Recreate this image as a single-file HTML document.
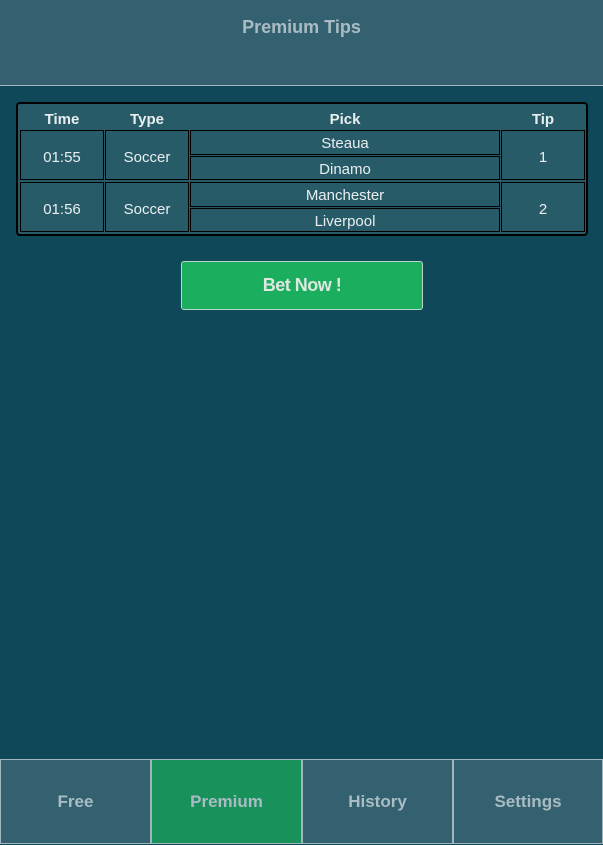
<!DOCTYPE html>
<html><head><style>
body{margin:0;width:603px;height:845px;background:#0f4858;font-family:"Liberation Sans","DejaVu Sans",sans-serif;position:relative;overflow:hidden}
.a{position:absolute;box-sizing:border-box;display:flex;align-items:center;justify-content:center}
.hdr{left:0;top:0;width:603px;height:86px;background:#33616f;border-bottom:1px solid #9fb6bd;color:#a9bcc3;font-weight:bold;font-size:18px;align-items:flex-start;padding-top:17px}
.tbl{left:16px;top:102px;width:572px;height:134px;background:#285b68;border:2px solid #000;border-radius:4px}
.th{color:#e8eef0;font-weight:bold;font-size:15px;top:109px;height:20px}
.c{border:1.5px solid #000;background:#285b68;color:#e8eef0;font-size:15px;padding-top:2px}
.big{padding-top:4px}
.btn{left:181px;top:261px;width:242px;height:49px;background:#1bae5e;border:1px solid #b9d9c6;border-radius:3px;color:#dde8e2;font-weight:bold;font-size:18px;letter-spacing:-0.5px}
.tab{top:759px;height:85px;width:151px;background:#33616f;border:1px solid #9fb6bd;color:#a9bcc3;font-weight:bold;font-size:17px}
</style></head><body>
<div class="a hdr">Premium Tips</div>
<div class="a tbl"></div>
<div class="a th" style="left:20px;width:84px">Time</div>
<div class="a th" style="left:105px;width:84px">Type</div>
<div class="a th" style="left:190px;width:310px">Pick</div>
<div class="a th" style="left:501px;width:84px">Tip</div>
<div class="a c big" style="left:20px;top:130px;width:84px;height:50px">01:55</div>
<div class="a c big" style="left:105px;top:130px;width:84px;height:50px">Soccer</div>
<div class="a c" style="left:190px;top:130px;width:310px;height:25px">Steaua</div>
<div class="a c" style="left:190px;top:156px;width:310px;height:24px">Dinamo</div>
<div class="a c big" style="left:501px;top:130px;width:84px;height:50px">1</div>
<div class="a c big" style="left:20px;top:182px;width:84px;height:50px">01:56</div>
<div class="a c big" style="left:105px;top:182px;width:84px;height:50px">Soccer</div>
<div class="a c" style="left:190px;top:182px;width:310px;height:25px">Manchester</div>
<div class="a c" style="left:190px;top:208px;width:310px;height:24px">Liverpool</div>
<div class="a c big" style="left:501px;top:182px;width:84px;height:50px">2</div>
<div class="a btn">Bet Now !</div>
<div class="a tab" style="left:0">Free</div>
<div class="a tab" style="left:151px;background:#18915a">Premium</div>
<div class="a tab" style="left:302px">History</div>
<div class="a tab" style="left:453px;width:150px">Settings</div>
</body></html>
